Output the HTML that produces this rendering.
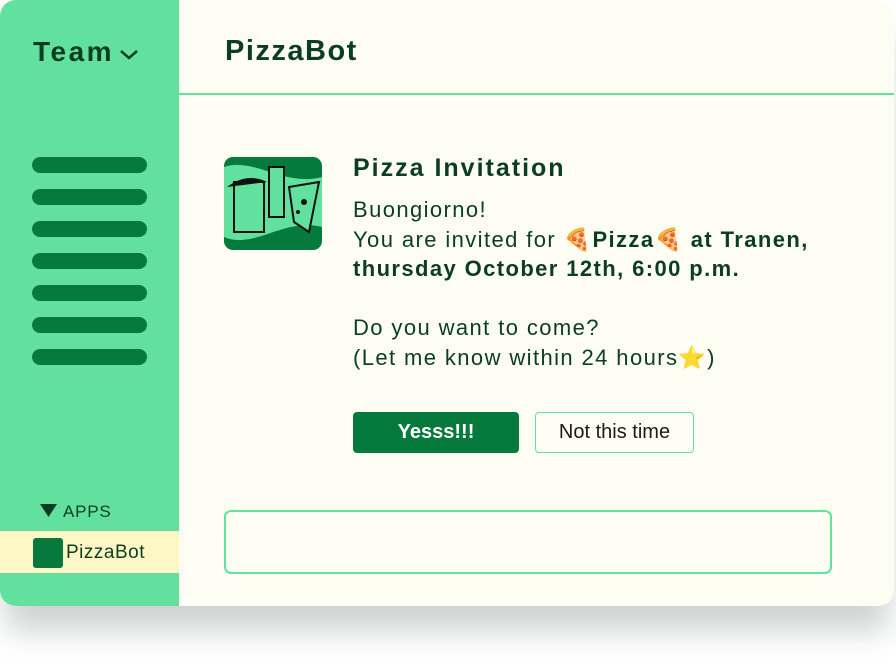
<!DOCTYPE html>
<html><head><style>
body{margin:0;width:896px;height:662px;background:#fff;position:relative;overflow:hidden;font-family:"Liberation Sans",sans-serif;}
.win{position:absolute;left:0;top:0;width:894px;height:606px;border-radius:16px;background:#fdfdf3;overflow:hidden;box-shadow:0 30px 30px -5px rgba(60,80,70,0.25);}
.side{position:absolute;left:0;top:0;width:179px;height:606px;background:#62e19e;}
.team{position:absolute;left:33px;top:36px;font-size:28px;font-weight:bold;color:#0b3d22;letter-spacing:2.5px;}
.bar{position:absolute;left:32px;width:115px;height:16px;border-radius:8px;background:#067a3c;}
.apps{position:absolute;left:40px;top:502px;font-size:17px;color:#0b3d22;letter-spacing:0.8px;}
.sel{position:absolute;left:0;top:531px;width:179px;height:42px;background:#fdf7c6;}
.sel .ic{position:absolute;left:33px;top:7px;width:30px;height:30px;border-radius:3px;background:#067a3c;}
.sel span{position:absolute;left:66px;top:11px;font-size:19px;color:#0b3d22;letter-spacing:0.5px;}
.hdr{position:absolute;left:179px;top:0;right:0;height:93px;border-bottom:2px solid #62e19e;}
.hdr b{position:absolute;left:46px;top:35px;font-size:29px;color:#0b3d22;letter-spacing:1.5px;}
.av{position:absolute;left:224px;top:157px;width:98px;height:93px;border-radius:9px;background:#067a3c;overflow:hidden;}
.msg{position:absolute;left:353px;top:154px;color:#0b3d22;font-size:22px;line-height:29.5px;letter-spacing:1.4px;}
.msg h3{margin:0 0 13px;font-size:25px;letter-spacing:2px;line-height:28px;}
.b1{position:absolute;left:353px;top:412px;width:166px;height:41px;border-radius:4px;background:#067a3c;color:#fff;font-size:20px;font-weight:bold;text-align:center;line-height:41px;}
.b2{position:absolute;left:535px;top:412px;width:157px;height:39px;border-radius:4px;border:1.5px solid #62e19e;color:#1a1a1a;font-size:20px;text-align:center;line-height:39px;}
.inp{position:absolute;left:224px;top:510px;width:604px;height:60px;border:2px solid #62e19e;border-radius:7px;}
</style></head><body>
<div class="win">
<div class="side">
<div class="team">Team<svg width="22" height="14" viewBox="0 0 22 14" style="vertical-align:middle;margin-left:4px"><path d="M3 4l8 7 8-7" fill="none" stroke="#0b3d22" stroke-width="2.5"/></svg></div>
<div class="bar" style="top:157px"></div><div class="bar" style="top:189px"></div><div class="bar" style="top:221px"></div><div class="bar" style="top:253px"></div><div class="bar" style="top:285px"></div><div class="bar" style="top:317px"></div><div class="bar" style="top:349px"></div>
<div class="apps"><svg width="17" height="13" viewBox="0 0 17 13" style="margin-right:6px"><path d="M0 0h17L8.5 13z" fill="#0b3d22"/></svg>APPS</div>
<div class="sel"><div class="ic"></div><span>PizzaBot</span></div>
</div>
<div class="hdr"><b>PizzaBot</b></div>
<div class="av"><svg width="98" height="93" viewBox="0 0 98 93">
<path d="M0 10 C30 0 60 30 98 20 L98 70 C60 60 30 93 0 80Z" fill="#62e19e"/>
<path d="M10 25 h30 v50 h-30z" fill="#62e19e" stroke="#111" stroke-width="2"/>
<path d="M3 30 q20-15 40-5" fill="#111"/>
<path d="M45 10 h15 v50 h-15z" fill="#62e19e" stroke="#111" stroke-width="2"/>
<path d="M65 30 l30-5 -10 50 -15 -10z" fill="#62e19e" stroke="#111" stroke-width="2"/>
<circle cx="80" cy="45" r="3" fill="#111"/><circle cx="74" cy="55" r="2" fill="#111"/>
</svg></div>
<div class="msg"><h3>Pizza Invitation</h3>
Buongiorno!<br>You are invited for 🍕<b>Pizza</b>🍕 <b>at Tranen,</b><br><b>thursday October 12th, 6:00 p.m.</b><br><br>Do you want to come?<br>(Let me know within 24 hours⭐)</div>
<div class="b1">Yesss!!!</div>
<div class="b2">Not this time</div>
<div class="inp"></div>
</div>
</body></html>
